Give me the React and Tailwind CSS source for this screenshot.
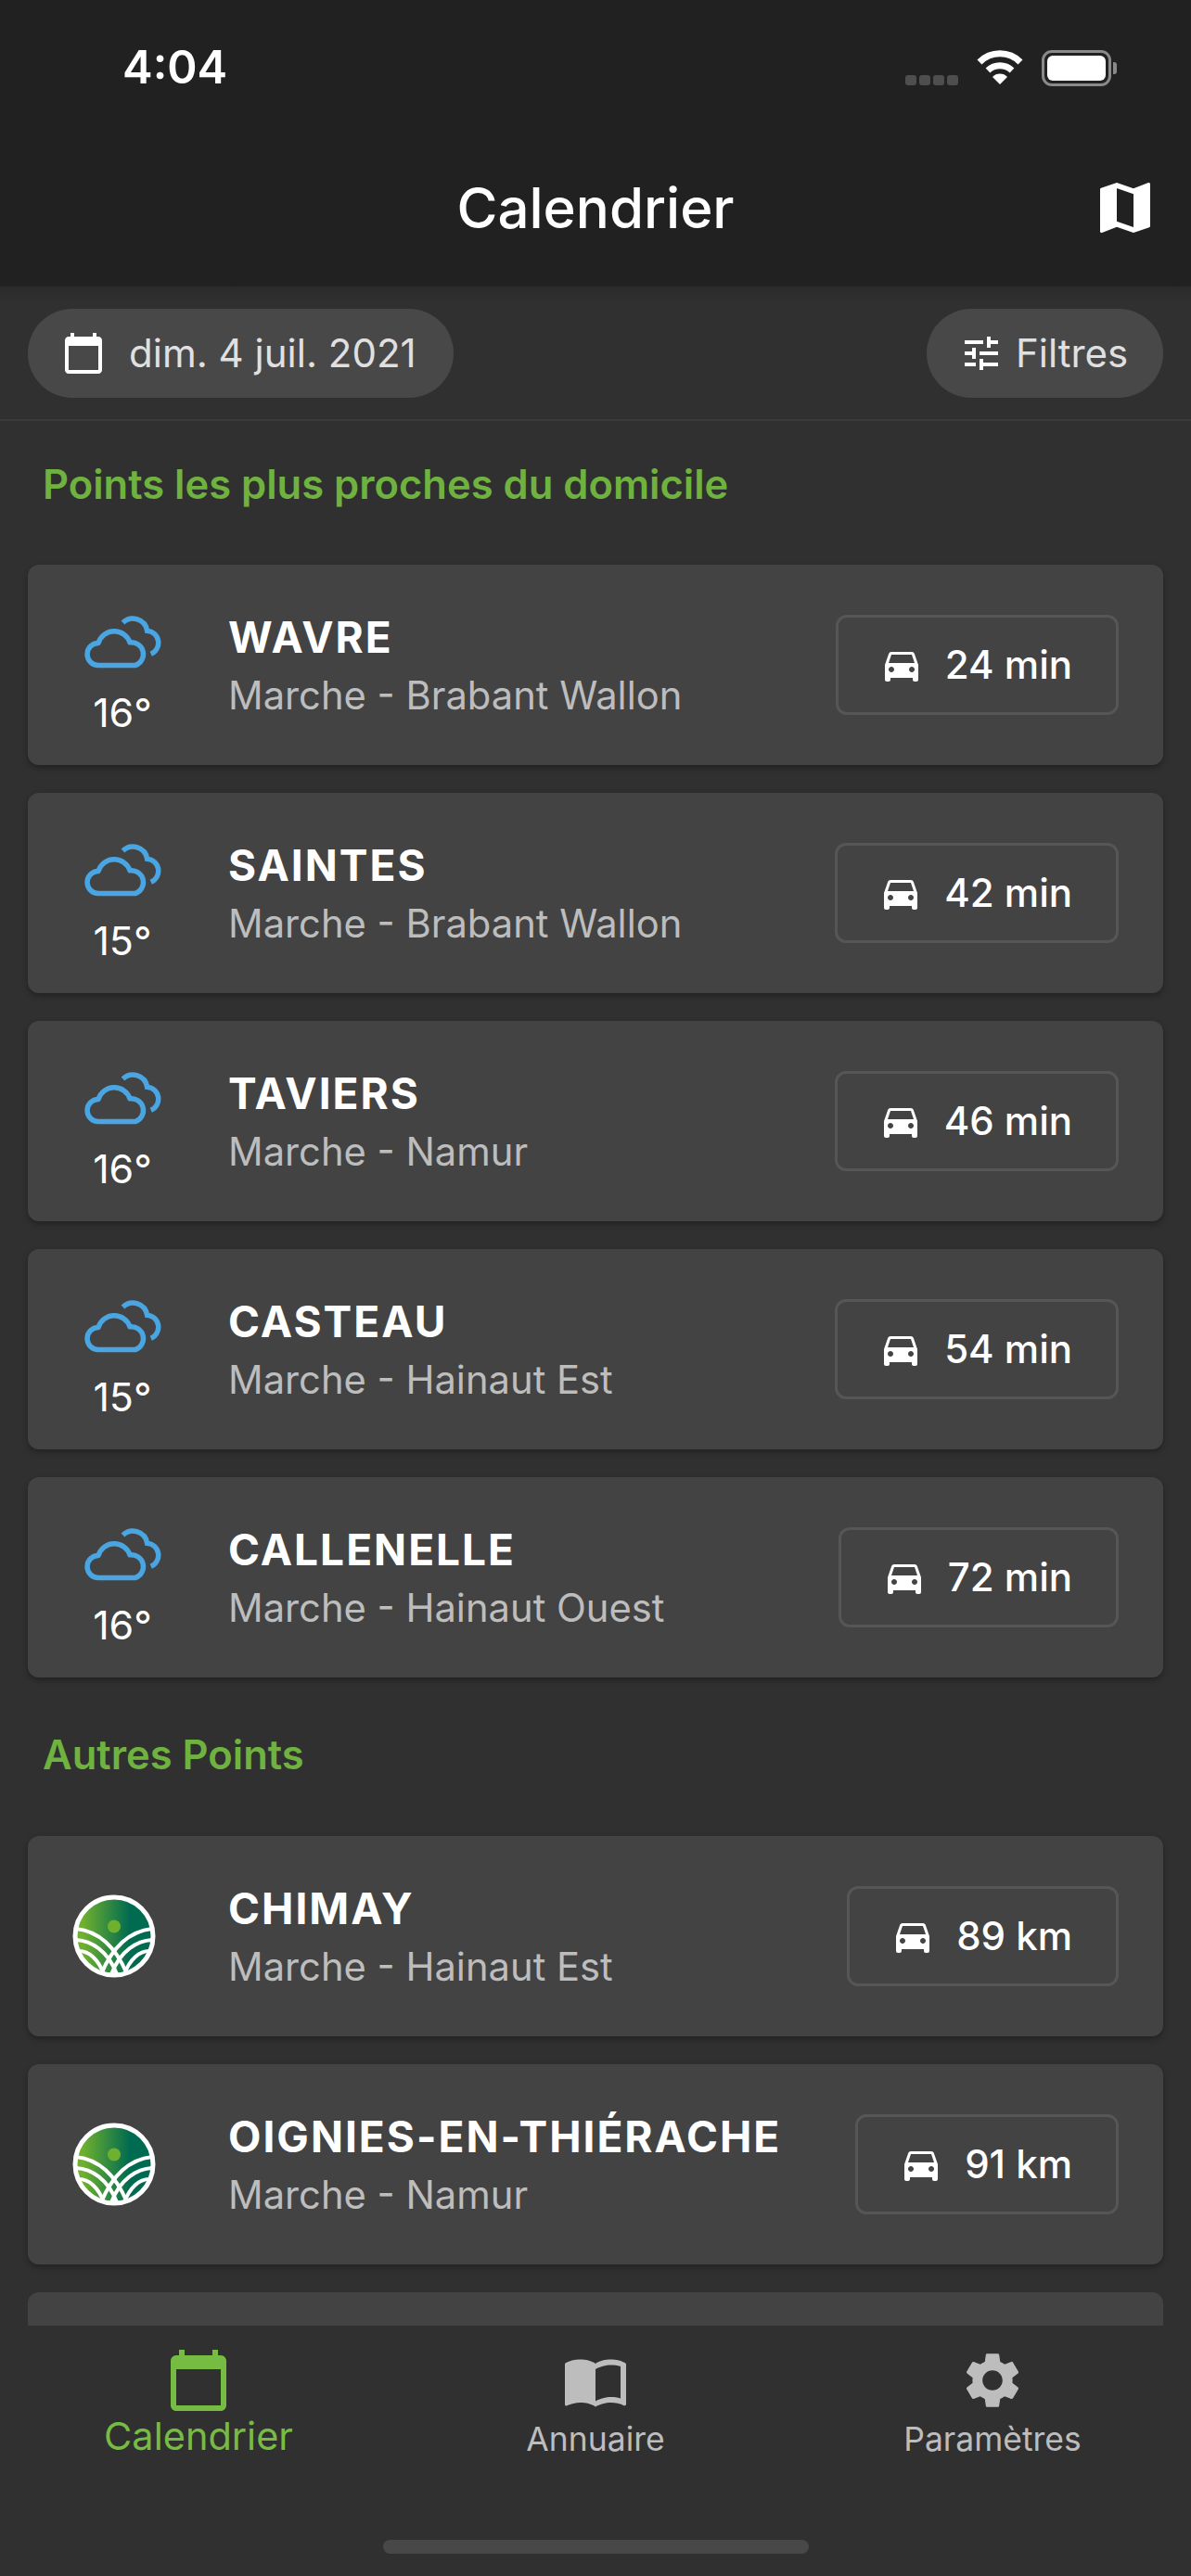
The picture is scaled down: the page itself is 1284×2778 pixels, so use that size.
import { MdMap, MdCalendarToday, MdTune, MdDirectionsCar, MdImportContacts, MdSettings } from 'react-icons/md';

const nearest = [
  { name: 'WAVRE', sub: 'Marche - Brabant Wallon', temp: '16°', dist: '24 min' },
  { name: 'SAINTES', sub: 'Marche - Brabant Wallon', temp: '15°', dist: '42 min' },
  { name: 'TAVIERS', sub: 'Marche - Namur', temp: '16°', dist: '46 min' },
  { name: 'CASTEAU', sub: 'Marche - Hainaut Est', temp: '15°', dist: '54 min' },
  { name: 'CALLENELLE', sub: 'Marche - Hainaut Ouest', temp: '16°', dist: '72 min' },
];

const others = [
  { name: 'CHIMAY', sub: 'Marche - Hainaut Est', dist: '89 km' },
  { name: 'OIGNIES-EN-THIÉRACHE', sub: 'Marche - Namur', dist: '91 km' },
];

function CloudIcon() {
  return (
    <svg viewBox="90 66 244 166" className="w-[85px] h-[57px]" fill="none" stroke="#4aa5e3" strokeWidth="16" strokeLinecap="butt">
      <path d="M135 222H250A37 37 0 0 0 234 150A52 52 0 0 0 135 152A35 35 0 0 0 135 222Z" strokeLinejoin="round" />
      <path d="M212 88A45 45 0 0 1 288 113A38 38 0 0 1 300 186" />
    </svg>
  );
}

function Logo() {
  return (
    <svg viewBox="0 0 90 90" className="w-[90px] h-[90px]">
      <defs>
        <linearGradient id="logoGreen" x1="0" x2="1" y1="0" y2="0">
          <stop offset="0.1" stopColor="#6fb02e" />
          <stop offset="0.7" stopColor="#006b50" />
        </linearGradient>
      </defs>
      <circle cx="45" cy="45" r="42" fill="url(#logoGreen)" stroke="#fff" strokeWidth="5" />
      <circle cx="45" cy="34.5" r="7" fill="#6fb02e" />
      <g fill="none" stroke="#fff" strokeWidth="4">
        <path d="M4 37C22 39 44 50 59 86" />
        <path d="M86 37C68 39 46 50 31 86" />
        <path d="M4 49C20 50 38 60 48 86" />
        <path d="M86 49C70 50 52 60 42 86" />
        <path d="M7 61C18 61 28 70 34 86" />
        <path d="M83 61C72 61 62 70 56 86" />
      </g>
    </svg>
  );
}

function DistanceTag({ value }) {
  return (
    <div className="h-[108px] flex items-center pl-[44px] pr-[47px] border-[3px] border-[#565656] rounded-[12px] text-white">
      <MdDirectionsCar className="text-[48px] mr-[23px]" />
      <span className="text-[42px] font-medium -mt-[2px]">{value}</span>
    </div>
  );
}

function PointCard({ item }) {
  return (
    <div className="h-[216px] shrink-0 flex items-center bg-[#434343] rounded-[12px] shadow-[0_3px_6px_rgba(0,0,0,0.3)] pr-[48px]">
      <div className="w-[216px] shrink-0">
        {item.temp ? (
          <div className="w-[110px] ml-[47px] pt-[22px] flex flex-col items-center">
            <CloudIcon />
            <span className="text-white text-[43px] leading-[50px] mt-[22px]">{item.temp}</span>
          </div>
        ) : (
          <div className="ml-[48px]">
            <Logo />
          </div>
        )}
      </div>
      <div className="flex-1 min-w-0">
        <div className="text-white text-[46px] tracking-[2px] leading-[56px] font-bold">{item.name}</div>
        <div className="text-[#bdbdbd] text-[41.7px] leading-[50px] mt-[10px]">{item.sub}</div>
      </div>
      <DistanceTag value={item.dist} />
    </div>
  );
}

export default function App() {
  return (
    <div className="w-[1284px] h-[2778px] flex flex-col overflow-hidden bg-[#303030] font-['Inter',sans-serif]">
      {/* Header */}
      <div className="h-[309px] shrink-0 bg-[#212121] text-white">
        <div className="h-[146px] flex justify-between pt-[46px] pl-[132px] pr-[80px]">
          <span className="text-[49px] leading-[54px] font-semibold">4:04</span>
          <div className="flex items-start gap-[20px] pt-[8px]">
            <div className="flex gap-[3px] mt-[27px]">
              <span className="w-[12px] h-[11px] rounded-[3px] bg-[#4e4e4e]" />
              <span className="w-[12px] h-[11px] rounded-[3px] bg-[#4e4e4e]" />
              <span className="w-[12px] h-[11px] rounded-[3px] bg-[#4e4e4e]" />
              <span className="w-[12px] h-[11px] rounded-[3px] bg-[#4e4e4e]" />
            </div>
            <svg viewBox="0 0 50 37" className="w-[50px] h-[37px]" fill="none" stroke="#fff" strokeWidth="7">
              <path d="M3 13A31 31 0 0 1 47 13" />
              <path d="M12 22A19 19 0 0 1 38 22" />
              <path d="M25 37L17 29A11 11 0 0 1 33 29Z" fill="#fff" stroke="none" />
            </svg>
            <div className="flex items-center">
              <div className="w-[75px] h-[39px] border-[3px] border-[#8a8a8a] rounded-[11px] p-[3px]">
                <div className="w-full h-full bg-white rounded-[6px]" />
              </div>
              <div className="w-[4px] h-[13px] ml-[2px] bg-[#8a8a8a] rounded-r-[3px]" />
            </div>
          </div>
        </div>
        <div className="relative flex items-center justify-center h-[100px] mt-[28px]">
          <span className="text-[60px] font-medium">Calendrier</span>
          <MdMap className="absolute right-[35px] top-[14px] text-[72px]" />
        </div>
      </div>

      {/* Filters */}
      <div className="h-[145px] shrink-0 flex items-start justify-between px-[30px] pt-[24px] border-b-[2px] border-[#3b3b3b] bg-gradient-to-b from-[#2b2b2b] to-[#303030] to-[12%]">
        <div className="h-[96px] w-[459px] flex items-center pl-[36px] bg-[#484848] rounded-full text-[#e0e0e0]">
          <MdCalendarToday className="text-[48px] text-white mr-[25px]" />
          <span className="text-[42px] -mt-[2px]">dim. 4 juil. 2021</span>
        </div>
        <div className="h-[96px] w-[255px] flex items-center pl-[35px] bg-[#484848] rounded-full text-[#e0e0e0]">
          <MdTune className="text-[48px] text-white mr-[13px]" />
          <span className="text-[42px] -mt-[2px]">Filtres</span>
        </div>
      </div>

      {/* List */}
      <div className="flex-1 min-h-0 overflow-hidden px-[30px]">
        <div className="text-[#6fb23f] text-[43.5px] leading-[56px] font-semibold pl-[16px] pt-[40px] pb-[59px]">Points les plus proches du domicile</div>
        <div className="flex flex-col gap-[30px]">
          {nearest.map((p) => <PointCard key={p.name} item={p} />)}
        </div>
        <div className="text-[#6fb23f] text-[43.5px] leading-[56px] font-semibold pl-[16px] pt-[55px] pb-[60px]">Autres Points</div>
        <div className="flex flex-col gap-[30px]">
          {others.map((p) => <PointCard key={p.name} item={p} />)}
          <div className="h-[216px] shrink-0 bg-[#434343] rounded-[12px]" />
        </div>
      </div>

      {/* Tab bar */}
      <div className="h-[270px] shrink-0 flex flex-col bg-[#303030]">
        <div className="grid grid-cols-3 pt-[23px]">
          <div className="flex flex-col items-center text-[#76bc43]">
            <MdCalendarToday className="text-[72px]" />
            <span className="text-[41.5px] leading-[44px] mt-[2px]">Calendrier</span>
          </div>
          <div className="flex flex-col items-center text-[#bdbdbd]">
            <MdImportContacts className="text-[72px]" />
            <span className="text-[35.5px] leading-[40px] mt-[8px]">Annuaire</span>
          </div>
          <div className="flex flex-col items-center text-[#bdbdbd]">
            <MdSettings className="text-[72px]" />
            <span className="text-[35.5px] leading-[40px] mt-[8px]">Paramètres</span>
          </div>
        </div>
        <div className="mt-auto mb-[24px] mx-auto w-[459px] h-[15px] rounded-full bg-[#484848]" />
      </div>
    </div>
  );
}
